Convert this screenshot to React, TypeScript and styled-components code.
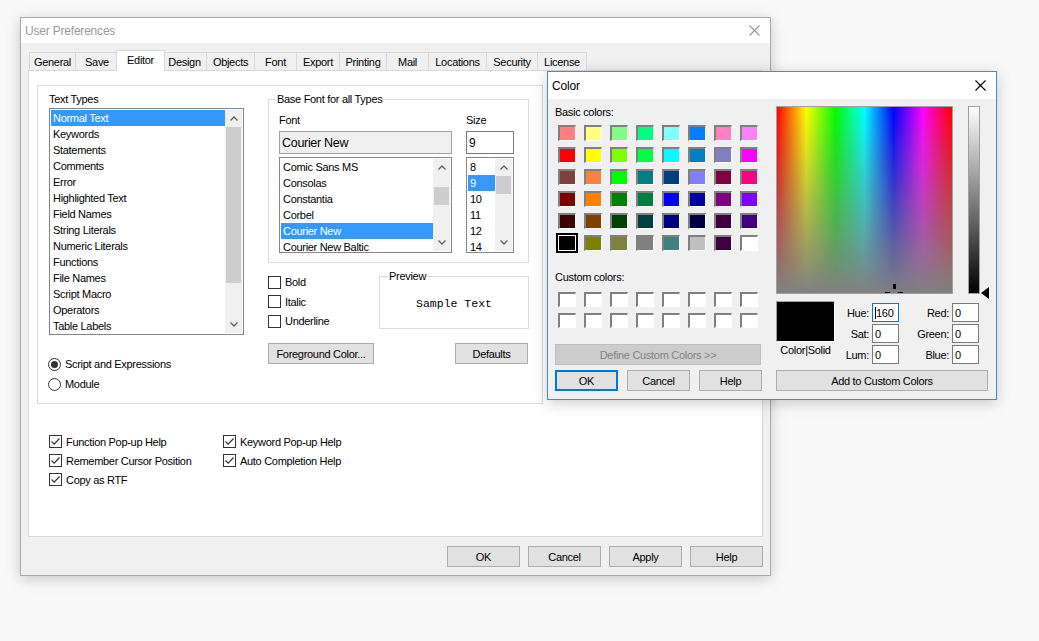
import React from 'react';
import styled, { createGlobalStyle, css } from 'styled-components';

const UI_FONT = `"Liberation Sans", Arial, sans-serif`;
const MONO_FONT = `"Liberation Mono", "Courier New", monospace`;

const GlobalStyle = createGlobalStyle`
  html, body { margin: 0; padding: 0; }
  body {
    width: 1039px; height: 641px; overflow: hidden;
    background: #f9f9f9;
    font-family: ${UI_FONT};
    font-size: 11px;
    letter-spacing: -0.3px;
    color: #000;
  }
  *, *::before, *::after { box-sizing: border-box; }
`;

const Desktop = styled.main`
  position: relative;
  width: 1039px;
  height: 641px;
  overflow: hidden;
  background: #f9f9f9;
`;

/* ---------- window chrome ---------- */

const Window = styled.section<{ $x: number; $y: number; $w: number; $h: number; $active?: boolean }>`
  position: absolute;
  left: ${p => p.$x}px;
  top: ${p => p.$y}px;
  width: ${p => p.$w}px;
  height: ${p => p.$h}px;
  display: flex;
  flex-direction: column;
  background: #f0f0f0;
  border: 1px solid ${p => (p.$active ? '#3c8fd6' : '#aaaaaa')};
  box-shadow: 0 3px 14px rgba(0, 0, 0, 0.2);
`;

const TitleBar = styled.header<{ $h: number }>`
  flex: 0 0 ${p => p.$h}px;
  display: flex;
  align-items: center;
  justify-content: space-between;
  padding: 0 10px 0 4px;
  background: #fff;
`;

const TitleText = styled.span<{ $active?: boolean }>`
  font-size: 12px;
  letter-spacing: -0.2px;
  color: ${p => (p.$active ? '#000' : '#999')};
`;

const CloseGlyph = ({ color }: { color: string }) => (
  <svg width="11" height="11" viewBox="0 0 11 11">
    <path d="M0.5 0.5 L10.5 10.5 M10.5 0.5 L0.5 10.5" stroke={color} strokeWidth="1.1" fill="none" />
  </svg>
);

/* ---------- main window body ---------- */

const MainBody = styled.div`
  flex: 1;
  min-height: 0;
  display: flex;
  flex-direction: column;
  padding: 7px;
`;

const TabStrip = styled.nav`
  flex: 0 0 20px;
  height: 20px;
  display: flex;
  align-items: flex-end;
  padding-left: 1px;
  position: relative;
  z-index: 1;
`;

const Tab = styled.div<{ $w: number; $selected?: boolean }>`
  flex: 0 0 ${p => (p.$selected ? p.$w + 4 : p.$w)}px;
  height: ${p => (p.$selected ? 21 : 18)}px;
  margin: 0 ${p => (p.$selected ? -3 : -1)}px ${p => (p.$selected ? -1 : 0)}px ${p => (p.$selected ? -2 : 0)}px;
  padding-bottom: ${p => (p.$selected ? 2 : 0)}px;
  border: 1px solid #d9d9d9;
  border-bottom: none;
  background: ${p => (p.$selected ? '#fff' : '#f0f0f0')};
  position: relative;
  z-index: ${p => (p.$selected ? 2 : 1)};
  display: flex;
  align-items: center;
  justify-content: center;
  white-space: nowrap;
`;

const TabPanel = styled.div`
  flex: 0 0 467px;
  position: relative;
  z-index: 0;
  background: #fff;
  border: 1px solid #d9d9d9;
  display: flex;
  flex-direction: column;
  padding: 14px 0 0 8px;
`;

const Frame = styled.div`
  width: 506px;
  height: 319px;
  border: 1px solid #dcdcdc;
  display: grid;
  grid-template-columns: 195px 261px;
  column-gap: 24px;
  align-items: start;
  padding: 7px 0 0 11px;
`;

const Column = styled.div`
  display: flex;
  flex-direction: column;
`;

const FieldLabel = styled.div<{ $mb?: number }>`
  height: 13px;
  line-height: 13px;
  margin-bottom: ${p => p.$mb ?? 0}px;
  white-space: nowrap;
`;

/* ---------- list box ---------- */

const ListFrame = styled.div<{ $w: number; $h: number }>`
  width: ${p => p.$w}px;
  height: ${p => p.$h}px;
  border: 1px solid #828790;
  padding: 1px;
  background: #fff;
  display: flex;
`;

const ListItems = styled.ul`
  flex: 1;
  min-width: 0;
  margin: 0;
  padding: 0;
  list-style: none;
  overflow: hidden;
`;

const ListItem = styled.li<{ $selected?: boolean }>`
  height: 16px;
  line-height: 16px;
  padding-left: 2px;
  white-space: nowrap;
  background: ${p => (p.$selected ? '#3399ff' : 'transparent')};
  color: ${p => (p.$selected ? '#fff' : '#000')};
`;

const ScrollBar = styled.div`
  flex: 0 0 17px;
  display: flex;
  flex-direction: column;
  background: #f0f0f0;
`;

const ScrollArrow = styled.div`
  flex: 0 0 17px;
  display: flex;
  align-items: center;
  justify-content: center;
`;

const ScrollGap = styled.div<{ $h?: number }>`
  ${p => (p.$h !== undefined ? css`flex: 0 0 ${p.$h}px;` : css`flex: 1;`)}
`;

const ScrollThumb = styled.div<{ $h: number }>`
  flex: 0 0 ${p => p.$h}px;
  margin: 0 1px;
  background: #cdcdcd;
`;

const Chevron = ({ up }: { up?: boolean }) => (
  <svg width="8" height="5" viewBox="0 0 8 5">
    <polyline
      points={up ? '0.5,4.5 4,1 7.5,4.5' : '0.5,0.5 4,4 7.5,0.5'}
      fill="none"
      stroke="#606060"
      strokeWidth="1.3"
    />
  </svg>
);

type ListBoxProps = {
  items: string[];
  selected: number;
  w: number;
  h: number;
  thumbGap: number;
  thumbH: number;
};

const ListBox = ({ items, selected, w, h, thumbGap, thumbH }: ListBoxProps) => (
  <ListFrame $w={w} $h={h}>
    <ListItems>
      {items.map((it, i) => (
        <ListItem key={it} $selected={i === selected}>
          {it}
        </ListItem>
      ))}
    </ListItems>
    <ScrollBar>
      <ScrollArrow>
        <Chevron up />
      </ScrollArrow>
      <ScrollGap $h={thumbGap} />
      <ScrollThumb $h={thumbH} />
      <ScrollGap />
      <ScrollArrow>
        <Chevron />
      </ScrollArrow>
    </ScrollBar>
  </ListFrame>
);

/* ---------- radio / checkbox ---------- */

const OptionList = styled.div<{ $mt: number }>`
  display: flex;
  flex-direction: column;
  margin-top: ${p => p.$mt}px;
  margin-left: -1px;
`;

const OptionRow = styled.label<{ $h: number }>`
  height: ${p => p.$h}px;
  display: flex;
  align-items: center;
  gap: 4px;
  white-space: nowrap;
`;

const RadioMark = styled.span<{ $on?: boolean }>`
  flex: 0 0 13px;
  width: 13px;
  height: 13px;
  border-radius: 50%;
  border: 1px solid #333;
  background: #fff;
  display: flex;
  align-items: center;
  justify-content: center;
  &::after {
    content: '';
    width: 7px;
    height: 7px;
    border-radius: 50%;
    background: ${p => (p.$on ? '#333' : 'transparent')};
  }
`;

const CheckMark = styled.span`
  flex: 0 0 13px;
  width: 13px;
  height: 13px;
  border: 1px solid #333;
  background: #fff;
  display: flex;
  align-items: center;
  justify-content: center;
`;

const CheckBox = ({ checked }: { checked?: boolean }) => (
  <CheckMark>
    {checked && (
      <svg width="11" height="11" viewBox="0 0 11 11">
        <polyline points="1.5,5.5 4.2,8.2 9.5,2.5" fill="none" stroke="#333" strokeWidth="1.2" />
      </svg>
    )}
  </CheckMark>
);

/* ---------- group boxes ---------- */

const GroupBox = styled.fieldset<{ $w: number; $h: number }>`
  width: ${p => p.$w}px;
  height: ${p => p.$h}px;
  margin: 0;
  padding: 0;
  min-width: 0;
  border: 1px solid #dcdcdc;
`;

const GroupLegend = styled.legend<{ $ml: number }>`
  margin-left: ${p => p.$ml}px;
  padding: 0 1px;
  line-height: 13px;
  font-size: 11px;
`;

const FontGrid = styled.div`
  display: grid;
  grid-template-columns: 173px 48px;
  grid-template-rows: 17px 26px 96px;
  column-gap: 14px;
  align-items: start;
  padding: 8px 0 0 10px;
`;

const TextBox = styled.div<{ $h: number; $w?: number; $readOnly?: boolean; $focused?: boolean; $size?: number }>`
  height: ${p => p.$h}px;
  ${p => (p.$w ? css`width: ${p.$w}px;` : '')}
  border: 1px solid ${p => (p.$focused ? '#0078d7' : p.$readOnly ? '#a0a0a0' : '#7a7a7a')};
  background: ${p => (p.$readOnly ? '#f0f0f0' : '#fff')};
  display: flex;
  align-items: center;
  padding-left: 2px;
  white-space: nowrap;
  font-size: ${p => p.$size ?? 11}px;
`;

const Caret = styled.span`
  display: inline-block;
  width: 1px;
  height: 12px;
  background: #000;
`;

const MiddleRow = styled.div`
  display: flex;
  align-items: flex-start;
  height: 59px;
  margin-top: 7px;
`;

const StyleChecks = styled.div`
  flex: 0 0 111px;
  display: flex;
  flex-direction: column;
  margin-top: 2px;
`;

const PreviewArea = styled.div`
  height: 40px;
  display: flex;
  align-items: center;
  justify-content: center;
  font-family: ${MONO_FONT};
  font-size: 11.5px;
  letter-spacing: 0;
`;

const ButtonRow = styled.div<{ $w: number; $mt: number }>`
  width: ${p => p.$w}px;
  margin-top: ${p => p.$mt}px;
  display: flex;
  justify-content: space-between;
`;

const PushButton = styled.button<{ $w: number; $default?: boolean; $disabled?: boolean; $mt?: number }>`
  width: ${p => p.$w}px;
  height: 21px;
  padding: 0;
  margin: ${p => p.$mt ?? 0}px 0 0 0;
  font-family: ${UI_FONT};
  font-size: 11px;
  letter-spacing: -0.3px;
  color: ${p => (p.$disabled ? '#838383' : '#000')};
  background: ${p => (p.$disabled ? '#cccccc' : '#e1e1e1')};
  border: ${p => (p.$default ? '2px solid #0078d7' : `1px solid ${p.$disabled ? '#bfbfbf' : '#adadad'}`)};
  white-space: nowrap;
`;

const OptionsGrid = styled.div`
  margin: 28px 0 0 12px;
  display: grid;
  grid-template-columns: 174px auto;
  grid-template-rows: repeat(3, 19px);
  grid-auto-flow: column;
`;

const MainButtons = styled.div`
  margin-top: 9px;
  display: flex;
  justify-content: flex-end;
  gap: 8px;
`;

/* ---------- color dialog ---------- */

const DialogBody = styled.div`
  flex: 1;
  display: flex;
  gap: 13px;
  padding: 7px 6px 0 7px;
`;

const LeftPane = styled.div`
  flex: 0 0 208px;
  display: flex;
  flex-direction: column;
`;

const RightPane = styled.div`
  flex: 0 0 213px;
  display: flex;
  flex-direction: column;
`;

const PaneLabel = styled.div<{ $mt?: number }>`
  height: 13px;
  line-height: 13px;
  margin-top: ${p => p.$mt ?? 0}px;
  white-space: nowrap;
`;

const SwatchGrid = styled.div<{ $rowGap: number; $mt: number }>`
  display: grid;
  grid-template-columns: repeat(8, 18px);
  column-gap: 8px;
  row-gap: ${p => p.$rowGap}px;
  margin: ${p => p.$mt}px 0 0 3px;
`;

const Swatch = styled.div<{ $color: string; $h: number; $selected?: boolean }>`
  height: ${p => p.$h}px;
  background: ${p => p.$color};
  border-style: solid;
  border-width: 2px 1px 1px 2px;
  border-color: #808080 #ffffff #ffffff #808080;
  ${p =>
    p.$selected &&
    css`
      border-width: 1px;
      border-color: #fff;
      outline: 2px solid #000;
    `}
`;

const DialogButtons = styled.div`
  margin-top: 5px;
  display: flex;
  gap: 9px;
`;

const PickerRow = styled.div`
  display: flex;
  height: 188px;
`;

const Spectrum = styled.div`
  position: relative;
  flex: 0 0 177px;
  height: 188px;
  overflow: hidden;
  border: 1px solid #a0a0a0;
  background:
    linear-gradient(to bottom, rgba(128, 128, 128, 0) 0%, #808080 100%),
    linear-gradient(
      to right,
      #ff0000 0%,
      #ffff00 16.67%,
      #00ff00 33.33%,
      #00ffff 50%,
      #0000ff 66.67%,
      #ff00ff 83.33%,
      #ff0000 100%
    );
`;

const CrossTick = styled.span<{ $x: number; $y: number; $w: number; $h: number }>`
  position: absolute;
  left: ${p => p.$x}px;
  top: ${p => p.$y}px;
  width: ${p => p.$w}px;
  height: ${p => p.$h}px;
  background: #000;
`;

const LumSlider = styled.div`
  position: relative;
  flex: 0 0 21px;
  margin-left: 15px;
  height: 188px;
`;

const LumBar = styled.div`
  width: 12px;
  height: 188px;
  border: 1px solid #a0a0a0;
  background: linear-gradient(to bottom, #ffffff 0%, #000000 100%);
`;

const LumArrow = styled.span`
  position: absolute;
  left: 13px;
  top: 181px;
  width: 0;
  height: 0;
  border-top: 6px solid transparent;
  border-bottom: 6px solid transparent;
  border-right: 8px solid #000;
`;

const ValuesRow = styled.div`
  display: flex;
  height: 64px;
  margin-top: 7px;
`;

const PreviewColumn = styled.div`
  flex: 0 0 59px;
  display: flex;
  flex-direction: column;
  align-items: center;
`;

const ColorPreview = styled.div`
  width: 59px;
  height: 41px;
  background: #000;
  border: 1px solid;
  border-color: #a0a0a0 #ffffff #ffffff #a0a0a0;
`;

const PreviewCaption = styled.div`
  margin-top: 2px;
  line-height: 13px;
  white-space: nowrap;
`;

const FieldsGrid = styled.div`
  display: grid;
  grid-template-columns: 37px 27px 53px 27px;
  grid-auto-rows: 19px;
  row-gap: 2px;
  margin-top: 2px;
  align-items: center;
`;

const FieldName = styled.span`
  text-align: right;
  padding-right: 3px;
  white-space: nowrap;
`;

/* ---------- data ---------- */

const TABS: [string, number][] = [
  ['General', 47],
  ['Save', 44],
  ['Editor', 45],
  ['Design', 45],
  ['Objects', 49],
  ['Font', 43],
  ['Export', 44],
  ['Printing', 48],
  ['Mail', 43],
  ['Locations', 59],
  ['Security', 52],
  ['License', 50],
];

const TEXT_TYPES = [
  'Normal Text',
  'Keywords',
  'Statements',
  'Comments',
  'Error',
  'Highlighted Text',
  'Field Names',
  'String Literals',
  'Numeric Literals',
  'Functions',
  'File Names',
  'Script Macro',
  'Operators',
  'Table Labels',
];

const FONTS = ['Comic Sans MS', 'Consolas', 'Constantia', 'Corbel', 'Courier New', 'Courier New Baltic'];
const SIZES = ['8', '9', '10', '11', '12', '14'];

const BASIC_COLORS = [
  '#FF8080', '#FFFF80', '#80FF80', '#00FF80', '#80FFFF', '#0080FF', '#FF80C0', '#FF80FF',
  '#FF0000', '#FFFF00', '#80FF00', '#00FF40', '#00FFFF', '#0080C0', '#8080C0', '#FF00FF',
  '#804040', '#FF8040', '#00FF00', '#008080', '#004080', '#8080FF', '#800040', '#FF0080',
  '#800000', '#FF8000', '#008000', '#008040', '#0000FF', '#0000A0', '#800080', '#8000FF',
  '#400000', '#804000', '#004000', '#004040', '#000080', '#000040', '#400040', '#400080',
  '#000000', '#808000', '#808040', '#808080', '#408080', '#C0C0C0', '#400040', '#FFFFFF',
];

const FIELDS: [string, string, string, string][] = [
  ['Hue:', '160', 'Red:', '0'],
  ['Sat:', '0', 'Green:', '0'],
  ['Lum:', '0', 'Blue:', '0'],
];

export default function App() {
  return (
    <Desktop>
      <GlobalStyle />

      <Window $x={20} $y={17} $w={751} $h={559}>
        <TitleBar $h={25}>
          <TitleText>User Preferences</TitleText>
          <CloseGlyph color="#999" />
        </TitleBar>
        <MainBody>
          <TabStrip>
            {TABS.map(([name, w]) => (
              <Tab key={name} $w={w} $selected={name === 'Editor'}>
                {name}
              </Tab>
            ))}
          </TabStrip>
          <TabPanel>
            <Frame>
              <Column>
                <FieldLabel $mb={2}>Text Types</FieldLabel>
                <ListBox items={TEXT_TYPES} selected={0} w={195} h={227} thumbGap={0} thumbH={156} />
                <OptionList $mt={19}>
                  <OptionRow $h={20}>
                    <RadioMark $on />
                    Script and Expressions
                  </OptionRow>
                  <OptionRow $h={20}>
                    <RadioMark />
                    Module
                  </OptionRow>
                </OptionList>
              </Column>

              <Column>
                <GroupBox $w={261} $h={170}>
                  <GroupLegend $ml={7}>Base Font for all Types</GroupLegend>
                  <FontGrid>
                    <FieldLabel>Font</FieldLabel>
                    <FieldLabel>Size</FieldLabel>
                    <TextBox $h={23} $readOnly $size={12.5}>
                      Courier New
                    </TextBox>
                    <TextBox $h={23} $size={12}>
                      9
                    </TextBox>
                    <ListBox items={FONTS} selected={4} w={173} h={96} thumbGap={11} thumbH={18} />
                    <ListBox items={SIZES} selected={1} w={48} h={96} thumbGap={0} thumbH={18} />
                  </FontGrid>
                </GroupBox>

                <MiddleRow>
                  <StyleChecks>
                    <OptionRow $h={20}>
                      <CheckBox />
                      Bold
                    </OptionRow>
                    <OptionRow $h={19}>
                      <CheckBox />
                      Italic
                    </OptionRow>
                    <OptionRow $h={20}>
                      <CheckBox />
                      Underline
                    </OptionRow>
                  </StyleChecks>
                  <GroupBox $w={150} $h={59}>
                    <GroupLegend $ml={8}>Preview</GroupLegend>
                    <PreviewArea>Sample Text</PreviewArea>
                  </GroupBox>
                </MiddleRow>

                <ButtonRow $w={260} $mt={14}>
                  <PushButton $w={106}>Foreground Color...</PushButton>
                  <PushButton $w={73}>Defaults</PushButton>
                </ButtonRow>
              </Column>
            </Frame>

            <OptionsGrid>
              <OptionRow $h={19}>
                <CheckBox checked />
                Function Pop-up Help
              </OptionRow>
              <OptionRow $h={19}>
                <CheckBox checked />
                Remember Cursor Position
              </OptionRow>
              <OptionRow $h={19}>
                <CheckBox checked />
                Copy as RTF
              </OptionRow>
              <OptionRow $h={19}>
                <CheckBox checked />
                Keyword Pop-up Help
              </OptionRow>
              <OptionRow $h={19}>
                <CheckBox checked />
                Auto Completion Help
              </OptionRow>
            </OptionsGrid>
          </TabPanel>
          <MainButtons>
            <PushButton $w={73}>OK</PushButton>
            <PushButton $w={73}>Cancel</PushButton>
            <PushButton $w={73}>Apply</PushButton>
            <PushButton $w={73}>Help</PushButton>
          </MainButtons>
        </MainBody>
      </Window>

      <Window $x={547} $y={71} $w={450} $h={329} $active>
        <TitleBar $h={27}>
          <TitleText $active>Color</TitleText>
          <CloseGlyph color="#000" />
        </TitleBar>
        <DialogBody>
          <LeftPane>
            <PaneLabel>Basic colors:</PaneLabel>
            <SwatchGrid $rowGap={6} $mt={6}>
              {BASIC_COLORS.map((c, i) => (
                <Swatch key={i} $color={c} $h={16} $selected={i === 40} />
              ))}
            </SwatchGrid>
            <PaneLabel $mt={20}>Custom colors:</PaneLabel>
            <SwatchGrid $rowGap={6} $mt={8}>
              {Array.from({ length: 16 }, (_, i) => (
                <Swatch key={i} $color="#ffffff" $h={15} />
              ))}
            </SwatchGrid>
            <PushButton $w={206} $disabled $mt={16}>
              Define Custom Colors &gt;&gt;
            </PushButton>
            <DialogButtons>
              <PushButton $w={63} $default>
                OK
              </PushButton>
              <PushButton $w={63}>Cancel</PushButton>
              <PushButton $w={63}>Help</PushButton>
            </DialogButtons>
          </LeftPane>

          <RightPane>
            <PickerRow>
              <Spectrum>
                <CrossTick $x={116} $y={177} $w={3} $h={5} />
                <CrossTick $x={108} $y={185} $w={5} $h={2} />
                <CrossTick $x={121} $y={185} $w={5} $h={2} />
              </Spectrum>
              <LumSlider>
                <LumBar />
                <LumArrow />
              </LumSlider>
            </PickerRow>
            <ValuesRow>
              <PreviewColumn>
                <ColorPreview />
                <PreviewCaption>Color|Solid</PreviewCaption>
              </PreviewColumn>
              <FieldsGrid>
                {FIELDS.map(([a, av, b, bv]) => (
                  <React.Fragment key={a}>
                    <FieldName>{a}</FieldName>
                    <TextBox $h={19} $focused={a === 'Hue:'}>
                      {a === 'Hue:' && <Caret />}
                      {av}
                    </TextBox>
                    <FieldName>{b}</FieldName>
                    <TextBox $h={19}>{bv}</TextBox>
                  </React.Fragment>
                ))}
              </FieldsGrid>
            </ValuesRow>
            <PushButton $w={212} $mt={5}>
              Add to Custom Colors
            </PushButton>
          </RightPane>
        </DialogBody>
      </Window>
    </Desktop>
  );
}
